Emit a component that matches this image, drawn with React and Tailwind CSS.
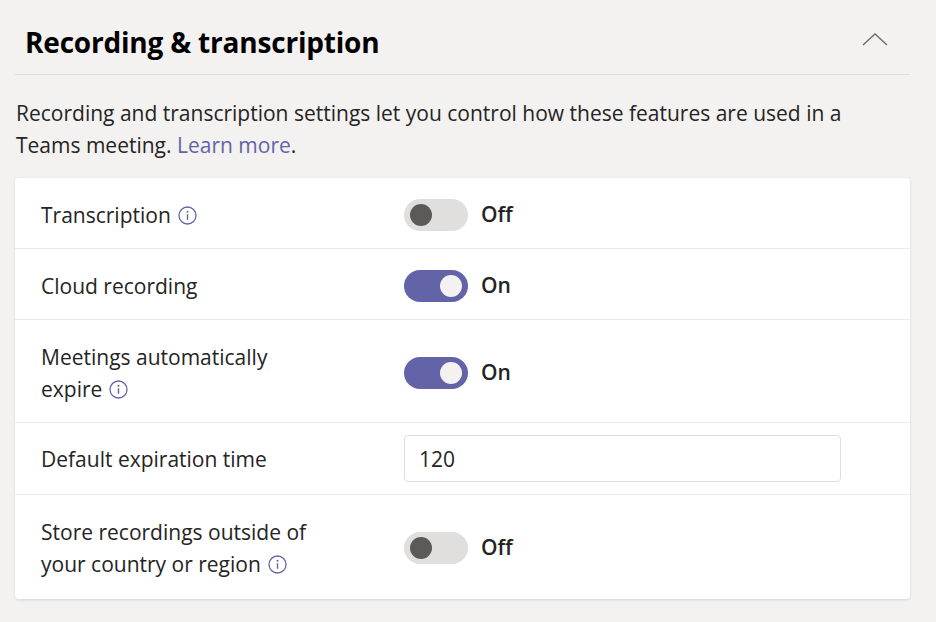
import React, { useState } from 'react';

const font = { fontFamily: '"Open Sans", "Noto Sans", "Liberation Sans", sans-serif' };

const InfoIcon = () => (
  <svg width="19" height="19" viewBox="0 0 19 19" className="inline-block align-middle ml-[7px] -mt-[3px]">
    <circle cx="9.5" cy="9.5" r="8.5" fill="none" stroke="#6264a7" strokeWidth="1.3" />
    <circle cx="9.5" cy="5.8" r="1" fill="#6264a7" />
    <line x1="9.5" y1="8.2" x2="9.5" y2="13.8" stroke="#6264a7" strokeWidth="1.4" />
  </svg>
);

const Toggle = ({ on, onClick }) => (
  <button onClick={onClick} className="flex items-center gap-[13px]">
    <span
      className={`w-[64px] h-[32px] rounded-full flex items-center px-[6px] ${
        on ? 'bg-[#6264a7] justify-end' : 'bg-[#e1dfdd] justify-start'
      }`}
    >
      <span className={`w-[22px] h-[22px] rounded-full ${on ? 'bg-[#f3f2f1]' : 'bg-[#5b5a59]'}`} />
    </span>
    <span className="text-[21px] font-semibold text-[#252423]">{on ? 'On' : 'Off'}</span>
  </button>
);

const Row = ({ label, info, children, last }) => (
  <div
    className={`flex items-center px-[26px] pt-[21px] ${
      last ? 'pb-[19px]' : 'pb-[17px] border-b border-[#edebe9]'
    }`}
  >
    <div className="w-[363px] pr-[80px] text-[21px] leading-[32px] text-[#252423]">
      {label}
      {info && <InfoIcon />}
    </div>
    <div className="flex-1">{children}</div>
  </div>
);

export default function App() {
  const [s, setS] = useState({ transcription: false, cloud: true, expire: true, store: false });
  const flip = (k) => setS({ ...s, [k]: !s[k] });

  return (
    <div className="w-[936px] h-[622px] bg-[#f3f2f1] overflow-hidden" style={font}>
      <div className="ml-[15px] mr-[26px] flex items-center justify-between border-b border-[#e1dfdd] h-[75px] pt-[10px] pl-[10px] pr-[22px]">
        <h2 className="text-[28px] font-bold text-black tracking-[-0.2px]">Recording &amp; transcription</h2>
        <svg width="26" height="14" viewBox="0 0 26 14" className="-mt-[6px]">
          <polyline points="1,13 13,2 25,13" fill="none" stroke="#6e6c6a" strokeWidth="1.4" />
        </svg>
      </div>
      <p className="mx-[16px] mt-[22px] text-[21px] leading-[32px] text-[#252423] pr-[50px]">
        Recording and transcription settings let you control how these features are used in a Teams meeting.{' '}
        <a className="text-[#6264a7]">Learn more</a>.
      </p>
      <div className="ml-[15px] mr-[26px] mt-[17px] bg-white rounded-[4px] shadow-[0_1px_3px_rgba(0,0,0,0.12)]">
        <Row label="Transcription" info>
          <Toggle on={s.transcription} onClick={() => flip('transcription')} />
        </Row>
        <Row label="Cloud recording">
          <Toggle on={s.cloud} onClick={() => flip('cloud')} />
        </Row>
        <Row label="Meetings automatically expire" info>
          <Toggle on={s.expire} onClick={() => flip('expire')} />
        </Row>
        <div className="flex items-center px-[26px] py-[12px] border-b border-[#edebe9]">
          <div className="w-[363px] text-[21px] leading-[32px] text-[#252423]">Default expiration time</div>
          <input
            defaultValue="120"
            className="w-[437px] h-[47px] border border-[#e1dfdd] rounded-[4px] px-[14px] text-[21px] text-[#252423] outline-none"
          />
        </div>
        <Row label="Store recordings outside of your country or region" info last>
          <Toggle on={s.store} onClick={() => flip('store')} />
        </Row>
      </div>
    </div>
  );
}
